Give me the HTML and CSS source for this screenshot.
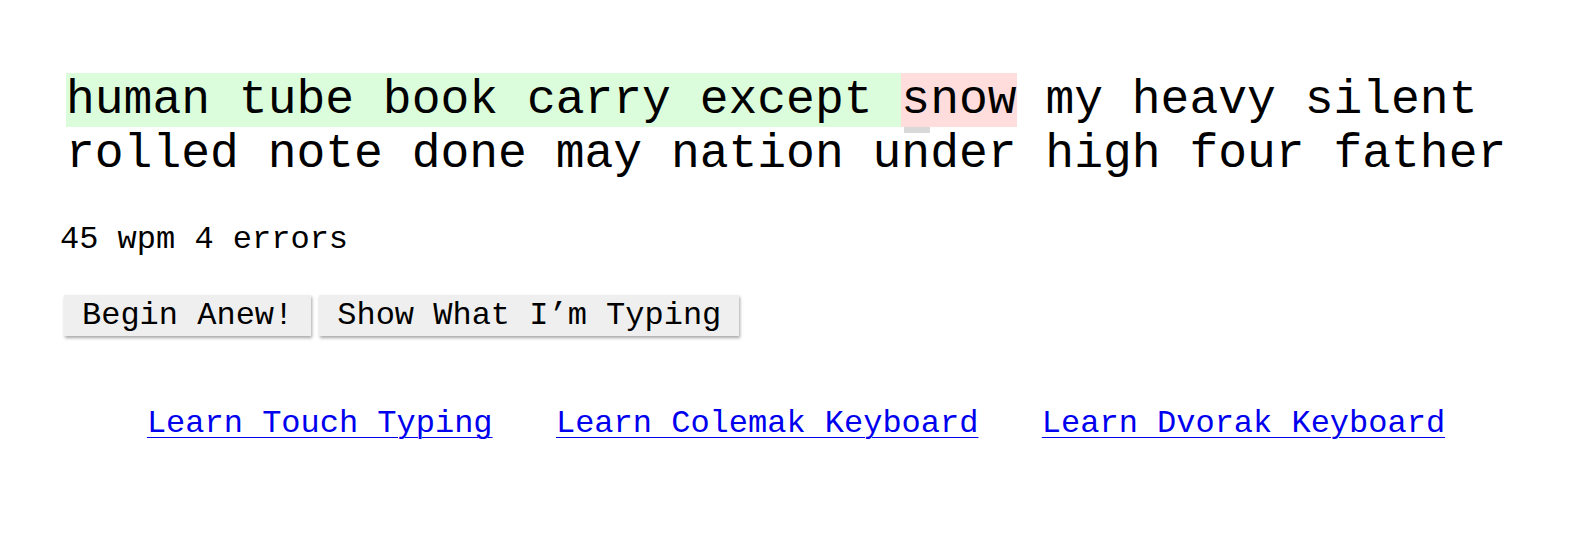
FILE: index.html
```html
<!DOCTYPE html>
<html>
<head>
<meta charset="utf-8">
<link rel="stylesheet" href="styles.css">
</head>
<body>
<main class="page">
  <div class="words"><span class="done">human tube book carry except </span><span class="wrong"><span class="cur">s</span>now</span> my heavy silent<br>rolled note done may nation under high four father</div>
  <div class="stats">45 wpm 4 errors</div>
  <div class="buttons">
    <button class="btn">Begin Anew!</button>
    <button class="btn">Show What I’m Typing</button>
  </div>
  <nav class="links">
    <a href="#">Learn Touch Typing</a>
    <a href="#">Learn Colemak Keyboard</a>
    <a href="#">Learn Dvorak Keyboard</a>
  </nav>
</main>
</body>
</html>
```
FILE: styles.css
```css
html, body {
  margin: 0;
  padding: 0;
  background: #ffffff;
}
body {
  font-family: "Liberation Mono", "Courier New", monospace;
  color: #000;
}
.page {
  padding: 73px 0 0 60px;
}
.words {
  margin-left: 6px;
  font-size: 48px;
  line-height: normal;
  white-space: nowrap;
}
.done {
  background: #dcfddc;
}
.wrong {
  background: #ffdddd;
}
.cur {
  position: relative;
}
.cur::after {
  content: "";
  position: absolute;
  left: 3px;
  top: 100%;
  width: 26px;
  height: 6px;
  background: #d9d9d9;
}
.stats {
  margin-top: 40px;
  font-size: 32px;
  line-height: normal;
}
.buttons {
  display: flex;
  gap: 8px;
  margin-top: 37px;
  margin-left: 4px;
}
.btn {
  font-family: "Liberation Mono", "Courier New", monospace;
  font-size: 32px;
  height: 41px;
  padding: 0 18px;
  border: none;
  background: #efefef;
  color: #000;
  box-shadow: 1px 2px 3px rgba(0, 0, 0, 0.35);
  border-radius: 0;
}
.links {
  display: flex;
  justify-content: center;
  gap: 63.4px;
  margin-top: 69px;
  padding-left: 20px;
  margin-left: -60px;
  font-size: 32px;
  line-height: normal;
}
.links a {
  color: #0000ee;
  text-decoration: underline;
  text-decoration-thickness: 1px;
  text-underline-offset: 5px;
}
```
